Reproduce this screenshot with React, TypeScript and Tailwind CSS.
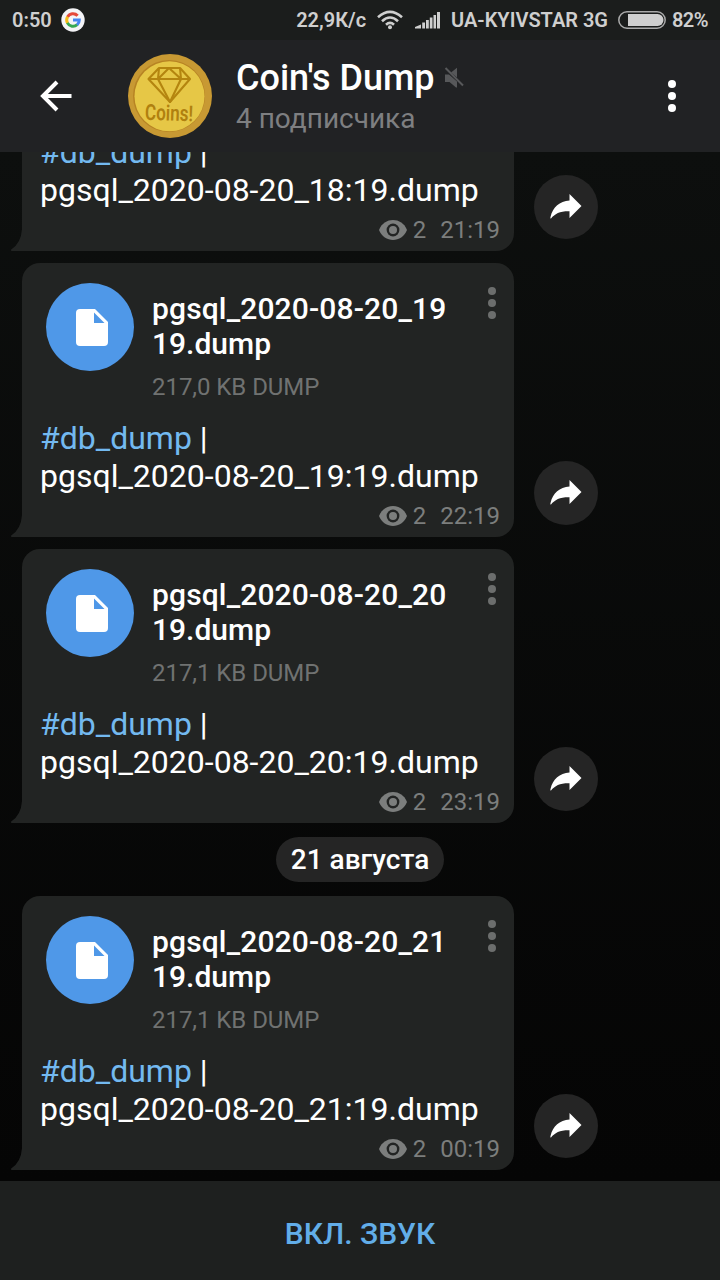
import React from "react";

type Dump = { file?: { title: [string, string]; size: string }; body: string; time: string };

const beforeDate: Dump[] = [
  { body: "pgsql_2020-08-20_18:19.dump", time: "21:19" },
  { file: { title: ["pgsql_2020-08-20_19", "19.dump"], size: "217,0 KB DUMP" }, body: "pgsql_2020-08-20_19:19.dump", time: "22:19" },
  { file: { title: ["pgsql_2020-08-20_20", "19.dump"], size: "217,1 KB DUMP" }, body: "pgsql_2020-08-20_20:19.dump", time: "23:19" },
];
const afterDate: Dump[] = [
  { file: { title: ["pgsql_2020-08-20_21", "19.dump"], size: "217,1 KB DUMP" }, body: "pgsql_2020-08-20_21:19.dump", time: "00:19" },
];

function Dots({ className }: { className: string }) {
  return (
    <svg className={className} width="8" height="32" viewBox="0 0 8 32" fill="currentColor">
      <circle cx="4" cy="4" r="4" />
      <circle cx="4" cy="16" r="4" />
      <circle cx="4" cy="28" r="4" />
    </svg>
  );
}

function GoogleBadge() {
  return (
    <svg width="24" height="24" viewBox="0 0 24 24">
      <circle cx="12" cy="12" r="11.7" fill="#f4f4f6" />
      <g fill="none" strokeWidth="3">
        <path d="M16.6 7.8A6.3 6.3 0 0 0 6.5 9" stroke="#e5493a" />
        <path d="M6.6 8.8a6.3 6.3 0 0 0 0 6.4" stroke="#f5bb17" />
        <path d="M6.4 14.9A6.3 6.3 0 0 0 16.2 16.7" stroke="#36a853" />
        <path d="M16.1 16.8A6.3 6.3 0 0 0 18.3 12H12" stroke="#4485f2" />
      </g>
    </svg>
  );
}

function CoinAvatar() {
  return (
    <svg width="84" height="84" viewBox="0 0 84 84">
      <circle cx="42" cy="42" r="42" fill="#c89933" />
      <circle cx="41" cy="42" r="36" fill="#b78323" />
      <circle cx="41.5" cy="42.3" r="35" fill="#e6c746" />
      <g fill="none" stroke="#b4850f" strokeWidth="2.1" strokeLinejoin="round">
        <path d="M31 14H52L62 25L42 48L20.500 25Z" />
        <path d="M20.500 25H62M31 14L30 25L42 48L53 25L52 14M30 25L41 14L53 25" />
      </g>
      <text
        x="17"
        y="66.5"
        textLength="48"
        lengthAdjust="spacingAndGlyphs"
        transform="rotate(2 41 62)"
        className="fill-[#b0800f] font-['Roboto',sans-serif] text-[22px] font-semibold"
      >
        Coins!
      </text>
    </svg>
  );
}

function StatusBar() {
  return (
    <div className="flex h-10 shrink-0 items-center bg-[#1b1d1c] pl-3 pr-[13px] text-[20px] font-semibold leading-10 text-[#cfcfcf]">
      <span className="w-[49px] whitespace-nowrap">0:50</span>
      <GoogleBadge />
      <span className="ml-auto">22,9К/с</span>
      <svg className="ml-[11px]" width="26" height="20" viewBox="0 0 26 20" fill="none" stroke="currentColor" strokeWidth="2.6">
        <path d="M1 7.300Q13-3.500 25 7.300M5 11.200Q13 3.800 21 11.200M9 14.800Q13 11 17 14.800" />
        <circle cx="13" cy="17.200" r="2" fill="currentColor" stroke="none" />
      </svg>
      <svg className="ml-3" width="25" height="18" viewBox="0 0 25 18" fill="currentColor">
        <path d="M0 17.500V16L6 13.500V17.500ZM7.200 11.500H10V17.500H7.200ZM11 9H13.800V17.500H11ZM14.800 6.500H17.500V17.500H14.800ZM18.500 4H21V17.500H18.500ZM22 1H25V17.500H22Z" />
      </svg>
      <span className="ml-[11px] whitespace-nowrap">UA-KYIVSTAR 3G</span>
      <svg className="ml-2.5" width="48" height="18" viewBox="0 0 48 18">
        <rect x=".8" y=".8" width="46.400" height="16.400" rx="8.200" fill="none" stroke="#a9a9a9" strokeWidth="1.500" />
        <path d="M10 3H39.500A6 6 0 0 1 39.500 15H10Z" fill="#cfcfcf" />
      </svg>
      <span className="ml-1.5 w-[35px] whitespace-nowrap tracking-[-0.6px]">82%</span>
    </div>
  );
}

function Header() {
  return (
    <header className="flex h-28 shrink-0 items-center bg-[#212224] pl-10 pr-11">
      <svg width="32" height="32" viewBox="0 0 32 32" fill="none" stroke="#fff" strokeWidth="4">
        <path d="M31.500 16H3M17 2L3 16L17 30" />
      </svg>
      <div className="ml-14">
        <CoinAvatar />
      </div>
      <div className="ml-6 flex flex-col pt-[3px]">
        <div className="flex items-center">
          <h1 className="text-[36px] font-medium leading-[42px] text-white">Coin's Dump</h1>
          <svg className="ml-2" width="22" height="22" viewBox="0 0 22 22" fill="#57585a">
            <path d="M2 7.500H6L14 14.500V20.500H13L6.500 15H2ZM8 5.500L14 .8V10.500Z" />
            <path d="M2.500 1L20 18.500" stroke="#57585a" strokeWidth="2" />
          </svg>
        </div>
        <p className="text-[28px] leading-[39px] text-[#7e7f81]">4 подписчика</p>
      </div>
      <Dots className="ml-auto text-white" />
    </header>
  );
}

function Attachment({ title, size }: { title: [string, string]; size: string }) {
  return (
    <div className="mb-[18px] flex pl-1.5">
      <div className="mt-5 flex size-[88px] items-center justify-center rounded-full bg-[#4f98e8] pl-1">
        <svg width="32" height="37" viewBox="0 0 32 37">
          <path d="M4 0H19L32 13V33Q32 37 28 37H4Q0 37 0 33V4Q0 0 4 0Z" fill="#fff" />
          <path d="M18 3.500V14H28.500Z" fill="#4f98e8" />
        </svg>
      </div>
      <div className="ml-[18px] pt-7">
        <h2 className="text-[30px] font-medium leading-[35px] text-white">
          <span className="tracking-[0.14px]">{title[0]}</span>
          <br />
          {title[1]}
        </h2>
        <p className="mt-3 text-[24px] leading-7 tracking-[-0.05px] text-[#707271]">{size}</p>
      </div>
      <Dots className="ml-auto mr-[18px] mt-6 text-[#6c6e6d]" />
    </div>
  );
}

function Message({ dump }: { dump: Dump }) {
  return (
    <div className="flex shrink-0 items-end gap-5 pl-[22px]">
      <article className="relative flex w-[492px] flex-col rounded-[18px] rounded-bl-none bg-[#222423] pb-[7px] pl-[18px]">
        <svg className="absolute bottom-0 -left-3" width="12" height="22" viewBox="0 0 12 22" fill="#222423">
          <path d="M12 0V22H1.500Q0 21 1.500 20.300Q11 14 12 0Z" />
        </svg>
        {dump.file && <Attachment {...dump.file} />}
        <p className="text-[32px] leading-[38px] text-white">
          <span className="text-[#73b9f0]">#db_dump</span> |<br />
          {dump.body}
        </p>
        <div className="mt-[7px] flex items-center justify-end pr-3.5 text-[24px] leading-7 text-[#7c7e7d]">
          <svg width="28" height="20" viewBox="0 0 28 20">
            <path d="M0 10C5-3.300 23-3.300 28 10C23 23.300 5 23.300 0 10Z" fill="#7c7e7d" />
            <circle cx="14" cy="10" r="6.400" fill="#222423" />
            <circle cx="14" cy="10" r="4" fill="#7c7e7d" />
          </svg>
          <span className="ml-1.5">2</span>
          <span className="ml-3.5">{dump.time}</span>
        </div>
      </article>
      <button className="mb-3 flex size-16 items-center justify-center rounded-full bg-[#252525]">
        <svg width="32" height="26" viewBox="0 0 32 26" fill="#fff">
          <path d="M19.500 0L31.500 12L19.500 24V17.200C10 17 5 19.500 1 24.500Q0 25 .5 23C3 12.500 9.500 7.500 19.500 6.500Z" />
        </svg>
      </button>
    </div>
  );
}

export default function App() {
  return (
    <div className="flex h-[1280px] w-[720px] flex-col overflow-hidden bg-black font-['Roboto',sans-serif]">
      <StatusBar />
      <Header />
      <main className="flex min-h-0 flex-1 flex-col justify-end gap-3 overflow-hidden bg-linear-to-b from-[#0d0f0e] to-[#050505] pb-[11px]">
        {beforeDate.map((d) => (
          <Message key={d.time} dump={d} />
        ))}
        <div className="my-0.5 flex h-[45px] shrink-0 items-center self-center rounded-full bg-[#252525] px-[15px] text-[28px] font-medium text-white">
          21 августа
        </div>
        {afterDate.map((d) => (
          <Message key={d.time} dump={d} />
        ))}
      </main>
      <footer className="flex h-[99px] shrink-0 items-center justify-center bg-[#1e201f] pt-1.5 text-[30px] font-medium text-[#62ade8]">
        ВКЛ. ЗВУК
      </footer>
    </div>
  );
}
